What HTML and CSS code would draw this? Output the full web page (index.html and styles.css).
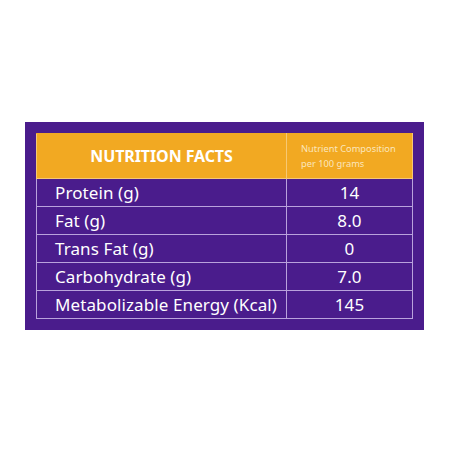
FILE: index.html
```html
<!DOCTYPE html>
<html lang="en">
<head>
  <meta charset="UTF-8">
  <title>Nutrition Facts</title>
  <link rel="stylesheet" href="styles.css">
</head>
<body>
  <div class="panel">
    <table class="facts">
      <tr class="head">
        <th class="title">NUTRITION FACTS</th>
        <th class="per">Nutrient Composition<br>per 100 grams</th>
      </tr>
      <tr><td>Protein (g)</td><td class="val">14</td></tr>
      <tr><td>Fat (g)</td><td class="val">8.0</td></tr>
      <tr><td>Trans Fat (g)</td><td class="val">0</td></tr>
      <tr><td>Carbohydrate (g)</td><td class="val">7.0</td></tr>
      <tr><td>Metabolizable Energy (Kcal)</td><td class="val">145</td></tr>
    </table>
  </div>
</body>
</html>
```

FILE: styles.css
```css
body {
  margin: 0;
  background-color: #fff;
  padding: 122px 0 0 25px;
  font-family: "Noto Sans", "Liberation Sans", sans-serif;
}
.panel {
  width: 377px;
  padding: 11px;
  background-color: #4a1c8c;
}
.facts {
  width: 100%;
  border-collapse: collapse;
  color: #fff;
}
.facts td {
  border: 1px solid #b9a2dc;
  height: 27px;
  padding: 0 0 0 18px;
  font-size: 17px;
  line-height: 27px;
  letter-spacing: 0.1px;
}
.facts .val {
  width: 125px;
  padding: 0;
  text-align: center;
}
.head th {
  background-color: #f2a922;
  height: 44px;
  padding: 0;
  border: 1px solid #f7c873;
  border-top-color: #f2a922;
}
.head .title {
  font-size: 16px;
  font-weight: bold;
  letter-spacing: -0.1px;
}
.head .per {
  text-align: left;
  padding-left: 14px;
  font-size: 9.3px;
  font-weight: normal;
  line-height: 15px;
  color: #fbe6bd;
}
```
